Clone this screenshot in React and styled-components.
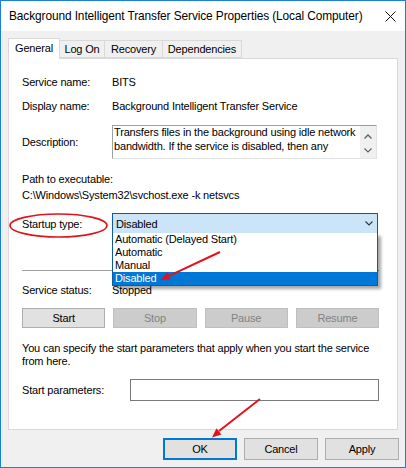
import React from 'react';
import styled, { createGlobalStyle } from 'styled-components';

const Global = createGlobalStyle`
  html, body { margin: 0; padding: 0; background: #fff; }
  body {
    font-family: "Liberation Sans", Arial, sans-serif;
    font-size: 11px;
    letter-spacing: -0.17px;
    color: #000;
  }
  * { box-sizing: border-box; }
`;

const Window = styled.div`
  position: relative;
  width: 406px;
  height: 468px;
  border: 1px solid #1a7fd6;
  background: #f0f0f0;
  display: flex;
  flex-direction: column;
`;

const TitleBar = styled.div`
  height: 30px;
  background: #fff;
  display: flex;
  align-items: center;
  padding: 0 9px 0 8px;
`;

const Title = styled.div`
  flex: 1;
  white-space: nowrap;
  font-size: 11.9px;
  letter-spacing: -0.1px;
`;

const CloseIcon = styled.svg`
  width: 11px;
  height: 11px;
  display: block;
`;

const Body = styled.div`
  padding: 7px 7px 0 7px;
  display: flex;
  flex-direction: column;
`;

const TabStrip = styled.div`
  height: 20px;
  display: flex;
  align-items: flex-end;
`;

const Tab = styled.div`
  position: relative;
  width: ${p => p.$w}px;
  height: ${p => (p.$active ? 21 : 18)}px;
  margin-bottom: ${p => (p.$active ? -1 : 0)}px;
  margin-left: ${p => (p.$first ? 0 : -1)}px;
  background: ${p => (p.$active ? '#fff' : '#f0f0f0')};
  border: 1px solid #d9d9d9;
  border-bottom: ${p => (p.$active ? 'none' : '1px solid #d9d9d9')};
  z-index: ${p => (p.$active ? 2 : 1)};
  display: flex;
  align-items: center;
  justify-content: center;
  padding-bottom: ${p => (p.$active ? 2 : 0)}px;
  white-space: nowrap;
`;

const Panel = styled.div`
  position: relative;
  height: 372px;
  background: #fff;
  border: 1px solid #d9d9d9;
  padding: 15px 18px 0 13px;
  display: flex;
  flex-direction: column;
`;

const Row = styled.div`
  position: relative;
  display: flex;
  align-items: center;
  min-height: 16px;
  line-height: 16px;
  margin-top: ${p => p.$mt || 0}px;
  white-space: nowrap;
`;

const Label = styled.div`
  width: ${p => p.$w || 90}px;
  flex-shrink: 0;
`;

const TextBox = styled.div`
  width: 265px;
  height: 34px;
  border: 1px solid;
  border-color: #a0a0a0 #e3e3e3 #e3e3e3 #a0a0a0;
  display: flex;
`;

const TextContent = styled.div`
  flex: 1;
  padding: 0 0 0 1px;
  line-height: 13.7px;
  overflow: hidden;
  white-space: nowrap;
`;

const ScrollBar = styled.div`
  width: 16px;
  background: #f0f0f0;
  display: flex;
  flex-direction: column;
  justify-content: space-between;
  align-items: center;
  padding: 8px 0 5px;
`;

const Chevron = styled.svg`
  width: 8px;
  height: 5px;
  display: block;
`;

const Combo = styled.div`
  position: relative;
  width: 266px;
  height: 21px;
  background: #cce4f7;
  border: 1px solid #0d5aa7;
  display: flex;
  align-items: center;
  padding: 0 4px 0 3px;
`;

const ComboText = styled.div`
  flex: 1;
`;

const DropList = styled.div`
  position: absolute;
  top: 100%;
  left: -1px;
  width: 266px;
  background: #fff;
  border: 1px solid #0d5aa7;
  border-top: none;
  box-shadow: 3px 3px 3px rgba(0, 0, 0, 0.35);
  z-index: 3;
`;

const DropItem = styled.div`
  height: 13px;
  line-height: 13px;
  padding-left: 2px;
  background: ${p => (p.$selected ? '#0078d7' : 'transparent')};
  color: ${p => (p.$selected ? '#fff' : '#000')};
`;

const Separator = styled.div`
  height: 1px;
  background: #a0a0a0;
  margin-top: 36px;
`;

const ButtonGrid = styled.div`
  display: grid;
  grid-template-columns: repeat(4, 1fr);
  column-gap: 8px;
  margin-top: 10px;
`;

const Button = styled.button`
  height: ${p => p.$h || 20}px;
  width: ${p => (p.$w ? p.$w + 'px' : 'auto')};
  padding: 0;
  font: inherit;
  letter-spacing: inherit;
  background: ${p => (p.$disabled ? '#cccccc' : '#e1e1e1')};
  color: ${p => (p.$disabled ? '#838383' : '#000')};
  border: ${p => (p.$default ? '2px solid #0078d7' : p.$disabled ? '1px solid #bfbfbf' : '1px solid #adadad')};
  border-radius: 0;
`;

const InfoText = styled.div`
  margin-top: 14px;
  line-height: 13px;
  white-space: nowrap;
`;

const Input = styled.div`
  width: 249px;
  height: 22px;
  border: 1px solid #7a7a7a;
  background: #fff;
`;

const Footer = styled.div`
  display: flex;
  justify-content: flex-end;
  gap: 7px;
  padding: 8px 6px 0 0;
`;

const Annotations = styled.svg`
  position: absolute;
  top: -1px;
  left: -1px;
  width: 406px;
  height: 468px;
  pointer-events: none;
  z-index: 10;
`;

const ChevronDown = ({ color = '#333' }) => (
  <Chevron viewBox="0 0 8 5">
    <polyline points="0.5,0.5 4,4 7.5,0.5" fill="none" stroke={color} strokeWidth="1.1" />
  </Chevron>
);

const ChevronUp = ({ color = '#606060' }) => (
  <Chevron viewBox="0 0 8 5">
    <polyline points="0.5,4.5 4,1 7.5,4.5" fill="none" stroke={color} strokeWidth="1.3" />
  </Chevron>
);

const tabs = [
  { label: 'General', w: 52, active: true },
  { label: 'Log On', w: 46 },
  { label: 'Recovery', w: 59 },
  { label: 'Dependencies', w: 80 },
];

const options = ['Automatic (Delayed Start)', 'Automatic', 'Manual', 'Disabled'];

export default function App() {
  return (
    <>
      <Global />
      <Window>
        <TitleBar>
          <Title>Background Intelligent Transfer Service Properties (Local Computer)</Title>
          <CloseIcon viewBox="0 0 11 11">
            <path d="M0.5 0.5 L10.5 10.5 M10.5 0.5 L0.5 10.5" stroke="#111" strokeWidth="1" fill="none" />
          </CloseIcon>
        </TitleBar>
        <Body>
          <TabStrip>
            {tabs.map((t, i) => (
              <Tab key={t.label} $w={t.w} $active={t.active} $first={i === 0}>
                {t.label}
              </Tab>
            ))}
          </TabStrip>
          <Panel>
            <Row>
              <Label>Service name:</Label>
              <div>BITS</div>
            </Row>
            <Row $mt={8}>
              <Label>Display name:</Label>
              <div>Background Intelligent Transfer Service</div>
            </Row>
            <Row $mt={11}>
              <Label>Description:</Label>
              <TextBox>
                <TextContent>
                  Transfers files in the background using idle network
                  <br />
                  bandwidth. If the service is disabled, then any
                </TextContent>
                <ScrollBar>
                  <ChevronUp />
                  <ChevronDown color="#606060" />
                </ScrollBar>
              </TextBox>
            </Row>
            <Row $mt={12}>Path to executable:</Row>
            <Row>C:\Windows\System32\svchost.exe -k netsvcs</Row>
            <Row $mt={10}>
              <Label>Startup type:</Label>
              <Combo>
                <ComboText>Disabled</ComboText>
                <ChevronDown />
                <DropList>
                  {options.map(o => (
                    <DropItem key={o} $selected={o === 'Disabled'}>
                      {o}
                    </DropItem>
                  ))}
                </DropList>
              </Combo>
            </Row>
            <Separator />
            <Row $mt={11}>
              <Label>Service status:</Label>
              <div>Stopped</div>
            </Row>
            <ButtonGrid>
              <Button>Start</Button>
              <Button $disabled>Stop</Button>
              <Button $disabled>Pause</Button>
              <Button $disabled>Resume</Button>
            </ButtonGrid>
            <InfoText>
              You can specify the start parameters that apply when you start the service
              <br />
              from here.
            </InfoText>
            <Row $mt={11}>
              <Label $w={108}>Start parameters:</Label>
              <Input />
            </Row>
          </Panel>
        </Body>
        <Footer>
          <Button $default $w={74} $h={22}>OK</Button>
          <Button $w={74} $h={22}>Cancel</Button>
          <Button $w={74} $h={22}>Apply</Button>
        </Footer>
        <Annotations viewBox="0 0 406 468">
          <ellipse cx="58.5" cy="225.5" rx="48.5" ry="11.5" fill="none" stroke="#e3121b" strokeWidth="1.6" />
          <line x1="220" y1="252" x2="169" y2="275.8" stroke="#e3121b" strokeWidth="2" />
          <polygon points="160,280 170.8,279.4 167.4,272.2" fill="#e3121b" />
          <line x1="260" y1="399" x2="219" y2="431" stroke="#e3121b" strokeWidth="2" />
          <polygon points="212,437.5 221.4,434.6 216.5,428.3" fill="#e3121b" />
        </Annotations>
      </Window>
    </>
  );
}
